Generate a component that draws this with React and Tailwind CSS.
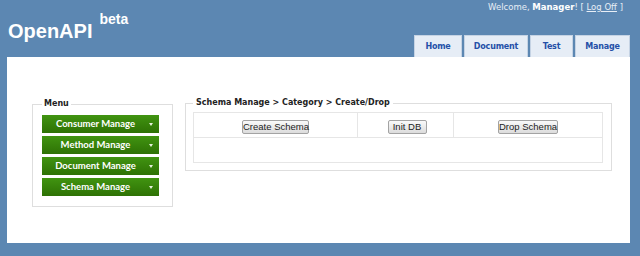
import React from 'react';

const tabs = [
  { label: 'Home', w: 'w-[48px]' },
  { label: 'Document', w: 'w-[64px]' },
  { label: 'Test', w: 'w-[43px]' },
  { label: 'Manage', w: 'w-[55px]' },
];

const menu = ['Consumer Manage', 'Method Manage', 'Document Manage', 'Schema Manage'];

const verdana = { fontFamily: '"DejaVu Sans", Verdana, sans-serif' };

const GrayButton = ({ children, w }) => (
  <button
    className={`h-[14px] ${w} whitespace-nowrap border border-[#a3a3a3] rounded-[2px] bg-gradient-to-b from-[#fafafa] to-[#dcdcdc] text-[9.5px] leading-none text-[#222] font-['Liberation_Sans',Arial,sans-serif]`}
  >
    {children}
  </button>
);

export default function App() {
  return (
    <div className="w-[640px] h-[256px] bg-[#5c87b2] overflow-hidden font-['Liberation_Sans',Arial,sans-serif]">
      {/* header */}
      <div className="h-[57px] flex justify-between">
        <div className="flex items-start pl-[8px] text-white font-bold">
          <span className="mt-[21px] text-[20px] leading-none">OpenAPI</span>
          <span className="mt-[12px] ml-[7px] text-[14px] leading-none">beta</span>
        </div>
        <div className="flex flex-col items-end justify-between pr-[10px]">
          <div className="mt-[1px] mr-[7px] text-[8.5px] leading-[12px] text-[#e8eef6]" style={verdana}>
            Welcome, <b className="text-white">Manager</b>! [ <span className="underline">Log Off</span> ]
          </div>
          <div className="flex gap-[2px]">
            {tabs.map((t) => (
              <div
                key={t.label}
                className={`${t.w} h-[22px] flex items-center justify-center bg-[#e6edf6] border border-[#c5d3e4] border-b-0 text-[8px] tracking-[-0.2px] font-bold text-[#2450a8]`}
                style={verdana}
              >
                {t.label}
              </div>
            ))}
          </div>
        </div>
      </div>

      {/* main panel */}
      <div className="ml-[7px] w-[623px] h-[186px] bg-white flex items-start gap-[12px] pl-[25px] pt-[41px]">
        <fieldset className="w-[141px] border border-[#dedede] px-[9px] pt-[5px] pb-[10px] flex flex-col gap-[3px]">
          <legend className="px-[2px] text-[8px] font-bold text-[#222] leading-[12px]" style={verdana}>
            Menu
          </legend>
          {menu.map((m) => (
            <div
              key={m}
              className="w-[117px] h-[18px] flex items-center bg-gradient-to-b from-[#419411] to-[#2e7205] text-white text-[9.5px] font-bold font-['Lato',sans-serif] whitespace-nowrap"
            >
              <span className="flex-1 text-center pl-[4px]">{m}</span>
              <span className="w-[14px] flex justify-center pr-[3px]">
                <span className="w-0 h-0 border-l-[2.5px] border-r-[2.5px] border-t-[3px] border-l-transparent border-r-transparent border-t-[#e6f2dc]" />
              </span>
            </div>
          ))}
        </fieldset>

        <fieldset className="w-[427px] border border-[#dedede] pl-[7px] pt-[3px] pb-[7px] -mt-[1px]">
          <legend className="px-[3px] text-[8px] font-bold text-[#222] leading-[12px]" style={verdana}>
            Schema Manage &gt; Category &gt; Create/Drop
          </legend>
          <table className="w-[410px] border-collapse border border-[#e6e6e6]">
            <tbody>
              <tr className="h-[21px]">
                <td className="w-[164px] border border-[#e6e6e6] text-center align-middle">
                  <GrayButton w="w-[67px]">Create Schema</GrayButton>
                </td>
                <td className="w-[96px] border border-[#e6e6e6] text-center align-middle pl-[3px]">
                  <GrayButton w="w-[39px]">Init DB</GrayButton>
                </td>
                <td className="border border-[#e6e6e6] text-center align-middle">
                  <GrayButton w="w-[60px]">Drop Schema</GrayButton>
                </td>
              </tr>
              <tr className="h-[25px]">
                <td colSpan={3} className="border border-[#e6e6e6]" />
              </tr>
            </tbody>
          </table>
        </fieldset>
      </div>
    </div>
  );
}
